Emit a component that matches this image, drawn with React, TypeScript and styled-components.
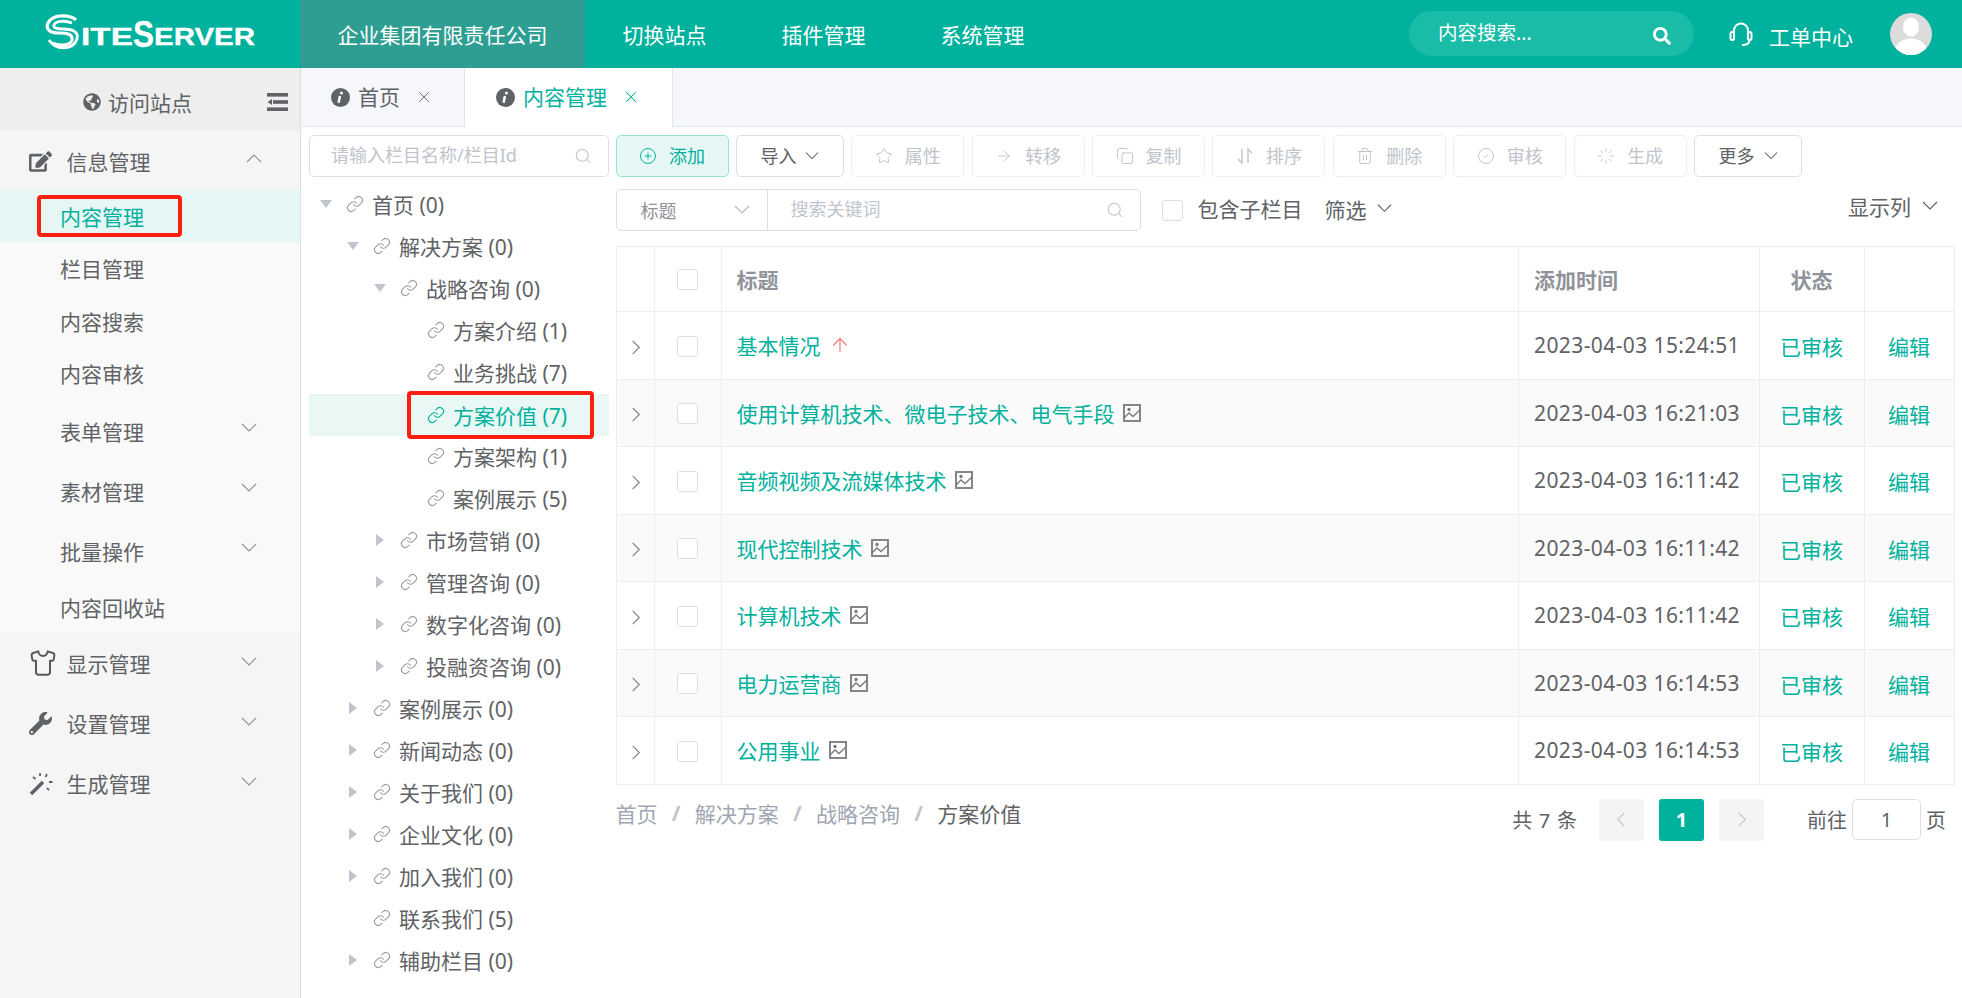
import React from "react";
import styled, { createGlobalStyle } from "styled-components";
import { FaEdit, FaGlobeAmericas, FaSearch, FaWrench } from "react-icons/fa";
import { ArrowRight, ArrowUp, CircleCheck, CirclePlus, Copy, Link, Loader, Search, Shirt, Star, Trash2, X } from "lucide-react";

const primary = "#00b19d";

const GlobalStyle = createGlobalStyle`
	html, body {
		margin: 0;
		padding: 0;
		height: 100%;
		background: #fff;
		font-family: "Noto Sans", "Noto Sans CJK SC", sans-serif;
		color: #606266;
		overflow: hidden;
	}
	* { box-sizing: border-box; }
`;

const Chevron = ({ dir = "down", size = 16, color = "#909399" }: { dir?: string; size?: number; color?: string }) => {
	const points: Record<string, string> = {
		down: "1,4 8,11 15,4",
		up: "1,11 8,4 15,11",
		right: "5,1 12,8 5,15",
		left: "11,1 4,8 11,15",
	};
	return (
		<svg width={size} height={size} viewBox="0 0 16 16" fill="none" stroke={color} strokeWidth="1.2">
			<polyline points={points[dir]} />
		</svg>
	);
};

const InfoIcon = () => (
	<svg width="19" height="19" viewBox="0 0 20 20">
		<circle cx="10" cy="10" r="10" fill="#5f6368" />
		<circle cx="11" cy="5.2" r="1.6" fill="#fff" />
		<path d="M9.4 8.4 L8 15.6" stroke="#fff" strokeWidth="2.6" />
	</svg>
);

const ImageIcon = () => (
	<svg width="18" height="18" viewBox="0 0 18 18" fill="none" stroke="#77797e" strokeWidth="1.8">
		<rect x="1" y="1" width="16" height="16" />
		<path d="M1 14 L6 9 L10 12.5 L17 6" strokeWidth="1.3" />
		<circle cx="6" cy="5.5" r="0.8" fill="#77797e" />
	</svg>
);

const SortIcon = () => (
	<svg width="18" height="18" viewBox="0 0 18 18" fill="none" stroke="#c0c4cc" strokeWidth="1.4">
		<path d="M6 2 V16 L2 12 M12 16 V2 L16 6" />
	</svg>
);

const HeadsetIcon = () => (
	<svg width="24" height="26" viewBox="0 0 24 26" fill="none" stroke="#fff" strokeWidth="2">
		<path d="M5 14 V10 C5 0 19 0 19 10 V14" />
		<rect x="1.5" y="11" width="3.6" height="8" rx="1.8" />
		<rect x="18.9" y="11" width="3.6" height="8" rx="1.8" />
		<path d="M20.5 19 C20.5 23 17 24 13 24" />
	</svg>
);

const CollapseIcon = () => (
	<svg width="21" height="18" viewBox="0 0 21 18" fill="#5f6368">
		<rect x="0" y="0" width="21" height="3.6" />
		<rect x="6" y="7.2" width="15" height="3.6" />
		<rect x="0" y="14.4" width="21" height="3.6" />
		<path d="M0.5 9 L5 6 V12 Z" />
	</svg>
);

const WandIcon = () => (
	<svg width="25" height="25" viewBox="0 0 25 25" fill="none" stroke="#5f6368">
		<path d="M2 23 L14 11" strokeWidth="3.6" />
		<path d="M11 2 V5 M18 3 L16.5 6 M4 6 L6.5 8 M20 11 H23.5 M18 17 L20 19" strokeWidth="1.8" />
	</svg>
);

const Logo = () => (
	<LogoSvg width="214" height="38" viewBox="0 0 214 38" fill="none">
		<path d="M31 6 C26 1 8 -1 3 9 C0 16 6 19 14 19 C22 19 28 20 27 26 C26 31 16 33 7 29" stroke="#fff" strokeWidth="3.2" />
		<path d="M4 26 C10 36 28 37 32 25 C34 17 26 15 18 15 C12 15 8 14 9 11 C10 7 20 6 27 9" stroke="#fff" strokeWidth="2.8" />
		<g fill="#fff" stroke="#fff" strokeWidth="0.3" fontFamily="'Liberation Sans', sans-serif" fontWeight="700">
			<text x="36" y="31" fontSize="24" textLength="52" lengthAdjust="spacingAndGlyphs">ITE</text>
			<text x="88" y="33" fontSize="36" textLength="21" lengthAdjust="spacingAndGlyphs">S</text>
			<text x="109" y="31" fontSize="24" textLength="101" lengthAdjust="spacingAndGlyphs">ERVER</text>
		</g>
	</LogoSvg>
);

const Avatar = () => (
	<AvatarCircle>
		<svg width="42" height="42" viewBox="0 0 42 42">
			<ellipse cx="21" cy="14" rx="8" ry="9.5" fill="#fff" />
			<ellipse cx="21" cy="38" rx="16" ry="12.5" fill="#fff" />
		</svg>
	</AvatarCircle>
);

type SubItem = { label: string; nudge: number; active?: boolean; arrow?: boolean };

const subItems: SubItem[] = [
	{ label: "内容管理", nudge: 0, active: true },
	{ label: "栏目管理", nudge: 0 },
	{ label: "内容搜索", nudge: 2 },
	{ label: "内容审核", nudge: 2 },
	{ label: "表单管理", nudge: 6, arrow: true },
	{ label: "素材管理", nudge: 5, arrow: true },
	{ label: "批量操作", nudge: 5, arrow: true },
	{ label: "内容回收站", nudge: 5 },
];

const treeItems = [
	{ label: "首页 (0)", level: 0, caret: "down" },
	{ label: "解决方案 (0)", level: 1, caret: "down" },
	{ label: "战略咨询 (0)", level: 2, caret: "down" },
	{ label: "方案介绍 (1)", level: 3 },
	{ label: "业务挑战 (7)", level: 3 },
	{ label: "方案价值 (7)", level: 3, active: true },
	{ label: "方案架构 (1)", level: 3 },
	{ label: "案例展示 (5)", level: 3 },
	{ label: "市场营销 (0)", level: 2, caret: "right" },
	{ label: "管理咨询 (0)", level: 2, caret: "right" },
	{ label: "数字化咨询 (0)", level: 2, caret: "right" },
	{ label: "投融资咨询 (0)", level: 2, caret: "right" },
	{ label: "案例展示 (0)", level: 1, caret: "right" },
	{ label: "新闻动态 (0)", level: 1, caret: "right" },
	{ label: "关于我们 (0)", level: 1, caret: "right" },
	{ label: "企业文化 (0)", level: 1, caret: "right" },
	{ label: "加入我们 (0)", level: 1, caret: "right" },
	{ label: "联系我们 (5)", level: 1 },
	{ label: "辅助栏目 (0)", level: 1, caret: "right" },
];

const rows = [
	{ title: "基本情况", time: "2023-04-03 15:24:51", top: true },
	{ title: "使用计算机技术、微电子技术、电气手段", time: "2023-04-03 16:21:03" },
	{ title: "音频视频及流媒体技术", time: "2023-04-03 16:11:42" },
	{ title: "现代控制技术", time: "2023-04-03 16:11:42" },
	{ title: "计算机技术", time: "2023-04-03 16:11:42" },
	{ title: "电力运营商", time: "2023-04-03 16:14:53" },
	{ title: "公用事业", time: "2023-04-03 16:14:53" },
];

const App = () => {
	return (
		<Page>
			<GlobalStyle />
			<Header>
				<Brand>
					<Logo />
				</Brand>
				<NavItem $active>企业集团有限责任公司</NavItem>
				<NavItem>切换站点</NavItem>
				<NavItem>插件管理</NavItem>
				<NavItem>系统管理</NavItem>
				<HeaderRight>
					<HeaderSearch>
						<HeaderSearchText>内容搜索...</HeaderSearchText>
						<FaSearch size={18} />
					</HeaderSearch>
					<Ticket>
						<HeadsetIcon />
						<TicketText>工单中心</TicketText>
					</Ticket>
					<Avatar />
				</HeaderRight>
			</Header>
			<Body>
				<Sidebar>
					<SideTop>
						<VisitLink>
							<FaGlobeAmericas size={18} />
							<span>访问站点</span>
						</VisitLink>
						<CollapseBtn>
							<CollapseIcon />
						</CollapseBtn>
					</SideTop>
					<MenuRow>
						<MenuIcon>
							<FaEdit size={23} />
						</MenuIcon>
						<MenuLabel>信息管理</MenuLabel>
						<MenuArrow $first>
							<Chevron dir="up" />
						</MenuArrow>
					</MenuRow>
					<SubMenu>
						{subItems.map((item) => (
							<SubRow key={item.label} $active={item.active} $tall={item.arrow} $nudge={item.nudge}>
								<SubLabel $active={item.active}>
									{item.label}
									{item.active && <RedMark $w={145} $h={42} />}
								</SubLabel>
								{item.arrow && (
									<MenuArrow $sub>
										<Chevron />
									</MenuArrow>
								)}
							</SubRow>
						))}
					</SubMenu>
					<MenuRow>
						<MenuIcon>
							<Shirt size={28} strokeWidth={1.7} color="#55595f" />
						</MenuIcon>
						<MenuLabel>显示管理</MenuLabel>
						<MenuArrow>
							<Chevron />
						</MenuArrow>
					</MenuRow>
					<MenuRow>
						<MenuIcon>
							<FaWrench size={23} />
						</MenuIcon>
						<MenuLabel>设置管理</MenuLabel>
						<MenuArrow>
							<Chevron />
						</MenuArrow>
					</MenuRow>
					<MenuRow>
						<MenuIcon>
							<WandIcon />
						</MenuIcon>
						<MenuLabel>生成管理</MenuLabel>
						<MenuArrow>
							<Chevron />
						</MenuArrow>
					</MenuRow>
				</Sidebar>
				<Main>
					<TabBar>
						<Tab $pad={30} $padEnd={31}>
							<InfoIcon />
							<TabText>首页</TabText>
							<TabClose>
								<X size={18} strokeWidth={1.2} />
							</TabClose>
						</Tab>
						<Tab $active $pad={31} $padEnd={32}>
							<InfoIcon />
							<TabText>内容管理</TabText>
							<TabClose>
								<X size={18} strokeWidth={1.4} />
							</TabClose>
						</Tab>
					</TabBar>
					<Content>
						<TreePanel>
							<TreeSearch>
								<BareInput placeholder="请输入栏目名称/栏目Id" readOnly />
								<Search size={18} strokeWidth={1.4} color="#c0c4cc" />
							</TreeSearch>
							<TreeList>
								{treeItems.map((item, i) => (
									<TreeRow key={i} $level={item.level} $active={item.active}>
										<CaretSlot>{item.caret && <Caret $dir={item.caret} />}</CaretSlot>
										<Link size={18} strokeWidth={1.5} color={item.active ? primary : "#9a9da3"} />
										<TreeLabel>
											{item.label}
											{item.active && <RedMark $w={187} $h={48} />}
										</TreeLabel>
									</TreeRow>
								))}
							</TreeList>
						</TreePanel>
						<RightPanel>
							<Toolbar>
								<ToolBtn $kind="primary">
									<CirclePlus size={18} strokeWidth={1.3} />
									<ToolText>添加</ToolText>
								</ToolBtn>
								<DropBtn>
									<ToolText>导入</ToolText>
									<Chevron size={14} color="#606266" />
								</DropBtn>
								<ToolBtn $kind="off">
									<Star size={18} strokeWidth={1.3} />
									<ToolText>属性</ToolText>
								</ToolBtn>
								<ToolBtn $kind="off">
									<ArrowRight size={18} strokeWidth={1.3} />
									<ToolText>转移</ToolText>
								</ToolBtn>
								<ToolBtn $kind="off">
									<Copy size={18} strokeWidth={1.3} />
									<ToolText>复制</ToolText>
								</ToolBtn>
								<ToolBtn $kind="off">
									<SortIcon />
									<ToolText>排序</ToolText>
								</ToolBtn>
								<ToolBtn $kind="off">
									<Trash2 size={18} strokeWidth={1.3} />
									<ToolText>删除</ToolText>
								</ToolBtn>
								<ToolBtn $kind="off">
									<CircleCheck size={18} strokeWidth={1.3} />
									<ToolText>审核</ToolText>
								</ToolBtn>
								<ToolBtn $kind="off">
									<Loader size={18} strokeWidth={1.3} />
									<ToolText>生成</ToolText>
								</ToolBtn>
								<DropBtn>
									<ToolText>更多</ToolText>
									<Chevron size={14} color="#606266" />
								</DropBtn>
							</Toolbar>
							<FilterRow>
								<SearchGroup>
									<FieldSelect>
										<span>标题</span>
										<Chevron size={16} color="#b4b8bf" />
									</FieldSelect>
									<KeywordBox>
										<BareInput placeholder="搜索关键词" readOnly />
										<Search size={18} strokeWidth={1.4} color="#c0c4cc" />
									</KeywordBox>
								</SearchGroup>
								<Check />
								<FilterText $lift={5}>包含子栏目</FilterText>
								<FilterText $lift={3}>
									筛选
									<Chevron size={15} color="#606266" />
								</FilterText>
								<ColumnsToggle>
									显示列
									<Chevron size={16} color="#606266" />
								</ColumnsToggle>
							</FilterRow>
							<Table>
								<HeadRow>
									<Cell $center />
									<Cell $center>
										<Check />
									</Cell>
									<HeadCell>标题</HeadCell>
									<HeadCell>添加时间</HeadCell>
									<HeadCell $center>状态</HeadCell>
									<HeadCell $center $last />
								</HeadRow>
								{rows.map((row, i) => (
									<BodyRow key={i} $striped={i % 2 === 1}>
										<ExpandCell $center>
											<Chevron dir="right" size={15} color="#7d7f84" />
										</ExpandCell>
										<LowCell $center>
											<Check />
										</LowCell>
										<Cell>
											<TitleLink>{row.title}</TitleLink>
											{row.top ? <ArrowUp size={22} strokeWidth={1.2} color="#f56c6c" /> : <ImageIcon />}
										</Cell>
										<TimeCell>{row.time}</TimeCell>
										<LowCell $center>
											<TitleLink>已审核</TitleLink>
										</LowCell>
										<LowCell $center $last>
											<TitleLink>编辑</TitleLink>
										</LowCell>
									</BodyRow>
								))}
							</Table>
							<Footer>
								<Breadcrumb>
									<Crumb>首页</Crumb>
									<CrumbSep>/</CrumbSep>
									<Crumb>解决方案</Crumb>
									<CrumbSep>/</CrumbSep>
									<Crumb>战略咨询</Crumb>
									<CrumbSep>/</CrumbSep>
									<Crumb $last>方案价值</Crumb>
								</Breadcrumb>
								<Pagination>
									<PageTotal>共 7 条</PageTotal>
									<PageBtn>
										<Chevron dir="left" size={15} color="#c0c4cc" />
									</PageBtn>
									<PageBtn $active>1</PageBtn>
									<PageBtn>
										<Chevron dir="right" size={15} color="#c0c4cc" />
									</PageBtn>
									<PageJump>
										前往
										<PageInput defaultValue="1" readOnly />
										页
									</PageJump>
								</Pagination>
							</Footer>
						</RightPanel>
					</Content>
				</Main>
			</Body>
		</Page>
	);
};

const Page = styled.div`
	width: 1962px;
	height: 998px;
	display: flex;
	flex-direction: column;
	overflow: hidden;
	font-size: 21px;
`;

const Header = styled.header`
	height: 68px;
	flex-shrink: 0;
	display: flex;
	align-items: stretch;
	background: ${primary};
	color: #fff;
`;
const Brand = styled.div`
	width: 300px;
	display: flex;
	align-items: center;
	padding: 0 0 2px 45px;
`;
const LogoSvg = styled.svg`
	overflow: visible;
`;
const NavItem = styled.div<{ $active?: boolean }>`
	display: flex;
	align-items: center;
	padding: 0 37.5px;
	background: ${(props) => (props.$active ? "#2f9e92" : "transparent")};
`;
const HeaderRight = styled.div`
	margin-left: auto;
	display: flex;
	align-items: center;
	padding-right: 30px;
`;
const HeaderSearch = styled.div`
	width: 285px;
	height: 45px;
	margin-top: -1px;
	padding: 4px 23px 0 29px;
	border-radius: 23px;
	display: flex;
	align-items: center;
	justify-content: space-between;
	background: #1abba7;
	font-size: 19.5px;
`;
const HeaderSearchText = styled.span`
	margin-bottom: 8px;
`;
const Ticket = styled.div`
	display: flex;
	align-items: center;
	gap: 16px;
	margin-left: 35px;
	margin-right: 37px;
`;
const TicketText = styled.span`
	margin-top: 4px;
`;
const AvatarCircle = styled.div`
	width: 42px;
	height: 42px;
	margin-top: -1px;
	border-radius: 50%;
	overflow: hidden;
	background: #dcdcdc;
`;

const Body = styled.div`
	flex: 1;
	display: flex;
	min-height: 0;
`;

const Sidebar = styled.aside`
	width: 301px;
	flex-shrink: 0;
	background: #f5f5f5;
	border-right: 1px solid #d8dce5;
`;
const SideTop = styled.div`
	height: 62px;
	display: flex;
	align-items: center;
	background: #eeeeee;
	padding: 5px 12px 0 83px;
`;
const VisitLink = styled.div`
	display: flex;
	align-items: center;
	gap: 7px;
`;
const CollapseBtn = styled.div`
	margin-left: auto;
	display: flex;
`;
const MenuRow = styled.div`
	height: 60px;
	display: flex;
	align-items: center;
	padding: 2px 0 0 29px;
`;
const MenuIcon = styled.span`
	width: 37.5px;
	display: flex;
	color: #5f6368;
`;
const MenuLabel = styled.span`
	flex: 1;
`;
const MenuArrow = styled.span<{ $first?: boolean; $sub?: boolean }>`
	display: flex;
	margin-right: ${(props) => (props.$first ? "38px" : "43px")};
	margin-bottom: ${(props) => (props.$first ? "5px" : props.$sub ? "6px" : "3px")};
`;
const SubMenu = styled.div`
	background: #f9f9f9;
	padding-bottom: 2px;
`;
const SubRow = styled.div<{ $active?: boolean; $tall?: boolean; $nudge: number }>`
	height: ${(props) => (props.$tall ? "60px" : "52px")};
	display: flex;
	align-items: center;
	padding: ${(props) => props.$nudge}px 0 0 60px;
	background: ${(props) => (props.$active ? "#e6f6f4" : "transparent")};
`;
const SubLabel = styled.span<{ $active?: boolean }>`
	flex: 1;
	position: relative;
	color: ${(props) => (props.$active ? primary : "inherit")};
`;
const RedMark = styled.i<{ $w: number; $h: number }>`
	position: absolute;
	left: -23px;
	top: 50%;
	width: ${(props) => props.$w}px;
	height: ${(props) => props.$h}px;
	transform: translateY(-50%);
	border: 4px solid #ff1f10;
	border-radius: 4px;
`;

const Main = styled.main`
	flex: 1;
	min-width: 0;
	display: flex;
	flex-direction: column;
`;
const TabBar = styled.div`
	height: 59px;
	flex-shrink: 0;
	display: flex;
	background: #f5f7fb;
	border-bottom: 1px solid #dfe4ed;
`;
const Tab = styled.div<{ $active?: boolean; $pad: number; $padEnd: number }>`
	display: flex;
	align-items: center;
	gap: 8px;
	height: ${(props) => (props.$active ? "59px" : "58px")};
	padding: 0 ${(props) => props.$padEnd}px 0 ${(props) => props.$pad}px;
	border-right: 1px solid #dfe4ed;
	background: ${(props) => (props.$active ? "#fff" : "transparent")};
	color: ${(props) => (props.$active ? primary : "inherit")};
`;
const TabText = styled.span`
	margin-bottom: 3px;
`;
const TabClose = styled.span`
	display: flex;
	margin-left: 7px;
	margin-bottom: 1px;
`;

const Content = styled.div`
	flex: 1;
	min-height: 0;
	display: flex;
	gap: 6.5px;
	padding: 8px 8px 0;
`;
const TreePanel = styled.section`
	width: 300px;
	flex-shrink: 0;
`;
const TreeSearch = styled.div`
	height: 42px;
	padding: 0 16px 0 21px;
	display: flex;
	align-items: center;
	border: 1px solid #dcdfe6;
	border-radius: 5px;
`;
const BareInput = styled.input`
	flex: 1;
	min-width: 0;
	padding: 0 0 2px;
	border: 0;
	outline: 0;
	background: transparent;
	font: inherit;
	font-size: 18px;
	color: #606266;
	&::placeholder {
		color: #c0c4cc;
		opacity: 1;
	}
`;
const TreeList = styled.div`
	margin-top: 7px;
`;
const TreeRow = styled.div<{ $level: number; $active?: boolean }>`
	height: 42px;
	display: flex;
	align-items: center;
	padding-left: ${(props) => 8 + props.$level * 27}px;
	padding-bottom: ${(props) => (props.$active ? "0" : "3px")};
	background: ${(props) => (props.$active ? "#e9f8f5" : "transparent")};
	color: ${(props) => (props.$active ? primary : "inherit")};
`;
const CaretSlot = styled.span`
	width: 29px;
	flex-shrink: 0;
	display: flex;
	align-items: center;
	padding-left: 3px;
`;
const Caret = styled.i<{ $dir: string }>`
	width: 0;
	height: 0;
	${(props) =>
		props.$dir === "down"
			? "border-left: 6px solid transparent; border-right: 6px solid transparent; border-top: 8px solid #c0c4cc;"
			: "border-top: 6px solid transparent; border-bottom: 6px solid transparent; border-left: 8px solid #c0c4cc; margin-left: 2px;"}
`;
const TreeLabel = styled.span`
	position: relative;
	margin-left: 8px;
	white-space: nowrap;
	& > i {
		left: -46px;
	}
`;

const RightPanel = styled.section`
	flex: 1;
	min-width: 0;
`;
const Toolbar = styled.div`
	display: flex;
	gap: 7.4px;
`;
const ToolText = styled.span`
	margin-bottom: 2px;
`;
const ToolBtn = styled.div<{ $kind: "primary" | "off" }>`
	width: 113px;
	height: 42px;
	display: flex;
	align-items: center;
	justify-content: center;
	gap: 12px;
	font-size: 18px;
	border-radius: 5px;
	border: 1px solid ${(props) => (props.$kind === "primary" ? "#99e0d8" : "#ebeef5")};
	background: ${(props) => (props.$kind === "primary" ? "#e6f7f5" : "#fff")};
	color: ${(props) => (props.$kind === "primary" ? primary : "#c0c4cc")};
`;
const DropBtn = styled.div`
	width: 108px;
	height: 42px;
	display: flex;
	align-items: center;
	justify-content: center;
	gap: 9px;
	font-size: 18px;
	border-radius: 5px;
	border: 1px solid #dcdfe6;
`;
const FilterRow = styled.div`
	height: 42px;
	margin-top: 12px;
	display: flex;
	align-items: center;
`;
const SearchGroup = styled.div`
	width: 525px;
	height: 42px;
	display: flex;
	border: 1px solid #dcdfe6;
	border-radius: 5px;
	margin-right: 21px;
`;
const FieldSelect = styled.div`
	width: 151px;
	display: flex;
	align-items: center;
	justify-content: space-between;
	padding: 0 17px 0 24px;
	font-size: 18px;
	color: #909399;
	border-right: 1px solid #dcdfe6;
`;
const KeywordBox = styled.div`
	flex: 1;
	display: flex;
	align-items: center;
	padding: 0 16px 0 23px;
`;
const Check = styled.span`
	display: block;
	width: 21px;
	height: 21px;
	flex-shrink: 0;
	background: #fff;
	border: 1px solid #dcdfe6;
	border-radius: 3px;
`;
const FilterText = styled.div<{ $lift: number }>`
	display: flex;
	align-items: center;
	gap: 10px;
	margin-left: 15px;
	margin-right: 7px;
	margin-bottom: ${(props) => props.$lift}px;
`;
const ColumnsToggle = styled.div`
	margin-left: auto;
	display: flex;
	align-items: center;
	gap: 11px;
	margin-right: 16px;
	margin-bottom: 9px;
`;

const Table = styled.div`
	margin-top: 15px;
	border-top: 1px solid #ebeef5;
	border-left: 1px solid #ebeef5;
`;
const columns = "38px 67px 797.5px 240.5px 105px 90px";
const HeadRow = styled.div`
	display: grid;
	grid-template-columns: ${columns};
	height: 65px;
`;
const BodyRow = styled.div<{ $striped: boolean }>`
	display: grid;
	grid-template-columns: ${columns};
	height: 67.5px;
	background: ${(props) => (props.$striped ? "#fafafa" : "#fff")};
`;
const Cell = styled.div<{ $center?: boolean; $last?: boolean }>`
	display: flex;
	align-items: center;
	gap: 8px;
	justify-content: ${(props) => (props.$center ? "center" : "flex-start")};
	padding: ${(props) => (props.$center ? "0" : "0 15px")};
	border-right: 1px solid #ebeef5;
	border-bottom: 1px solid #ebeef5;
`;
const HeadCell = styled(Cell)`
	font-weight: 700;
	color: #909399;
`;
const LowCell = styled(Cell)`
	padding-top: 2px;
`;
const ExpandCell = styled(Cell)`
	padding-top: 4px;
`;
const TimeCell = styled(Cell)`
	letter-spacing: 0.4px;
`;
const TitleLink = styled.span`
	color: ${primary};
`;

const Footer = styled.div`
	margin-top: 14px;
	display: flex;
	justify-content: space-between;
`;
const Breadcrumb = styled.div`
	display: flex;
	gap: 14.25px;
	height: 29px;
	align-items: center;
`;
const Crumb = styled.span<{ $last?: boolean }>`
	color: ${(props) => (props.$last ? "#606266" : "#a0a6b2")};
`;
const CrumbSep = styled.span`
	color: #c0c4cc;
	font-weight: 700;
`;
const Pagination = styled.div`
	display: flex;
	align-items: center;
	gap: 15px;
	padding-right: 8px;
	font-size: 20px;
`;
const PageTotal = styled.span`
	margin-right: 7px;
	word-spacing: 1.5px;
`;
const PageBtn = styled.div<{ $active?: boolean }>`
	width: 45px;
	height: 42px;
	display: flex;
	align-items: center;
	justify-content: center;
	border-radius: 3px;
	font-weight: 700;
	background: ${(props) => (props.$active ? primary : "#f4f4f5")};
	color: #fff;
`;
const PageJump = styled.div`
	display: flex;
	align-items: center;
	gap: 5px;
	margin-left: 28px;
`;
const PageInput = styled.input`
	width: 69px;
	height: 41px;
	border: 1px solid #dcdfe6;
	border-radius: 5px;
	outline: 0;
	padding: 0;
	text-align: center;
	font: inherit;
	color: #606266;
`;

export default App;
